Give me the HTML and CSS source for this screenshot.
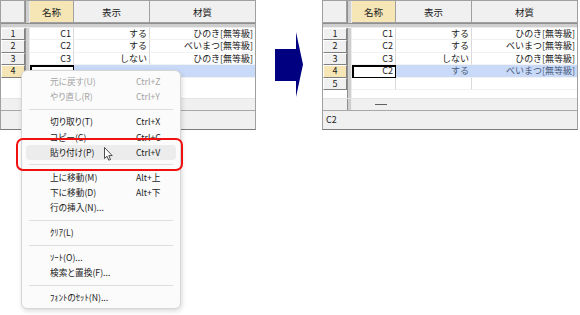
FILE: index.html
```html
<!DOCTYPE html>
<html lang="ja">
<head>
  <meta charset="UTF-8" />
  <title>貼り付け</title>
  <link rel="stylesheet" href="styles.css">
</head>
<body>
  <div class="page">

    <div class="shot">
      <div class="head">
        <div class="corner"></div>
        <div class="split"></div>
        <div class="hcell c-name cur">名称</div>
        <div class="hcell c-view">表示</div>
        <div class="hcell c-mat">材質</div>
      </div>
      <div class="hsplit"></div>
      <div class="row">
        <div class="rh">1</div><div class="split"></div>
        <div class="cell c-name">C1</div><div class="cell c-view">する</div><div class="cell c-mat">ひのき[無等級]</div>
      </div>
      <div class="row">
        <div class="rh">2</div><div class="split"></div>
        <div class="cell c-name">C2</div><div class="cell c-view">する</div><div class="cell c-mat">べいまつ[無等級]</div>
      </div>
      <div class="row">
        <div class="rh">3</div><div class="split"></div>
        <div class="cell c-name">C3</div><div class="cell c-view">しない</div><div class="cell c-mat">ひのき[無等級]</div>
      </div>
      <div class="row sel">
        <div class="rh cur">4</div><div class="split"></div>
        <div class="cell c-name edit"></div><div class="cell c-view"></div><div class="cell c-mat"></div>
      </div>
      <div class="fill">
        <div class="blank"></div><div class="split"></div>
      </div>
      <div class="strip">
        <div class="blank"></div><div class="split"></div><div class="strip-body"></div>
      </div>
      <div class="status"></div>

      <div class="menu">
        <div class="item off"><span class="label">元に戻す(U)</span><span class="key">Ctrl+Z</span></div>
        <div class="item off"><span class="label">やり直し(R)</span><span class="key">Ctrl+Y</span></div>
        <div class="sep"></div>
        <div class="item"><span class="label">切り取り(T)</span><span class="key">Ctrl+X</span></div>
        <div class="item"><span class="label">コピー(C)</span><span class="key">Ctrl+C</span></div>
        <div class="item hover"><span class="label">貼り付け(P)</span><span class="key">Ctrl+V</span></div>
        <div class="sep"></div>
        <div class="item"><span class="label">上に移動(M)</span><span class="key">Alt+上</span></div>
        <div class="item"><span class="label">下に移動(D)</span><span class="key">Alt+下</span></div>
        <div class="item"><span class="label">行の挿入(N)...</span></div>
        <div class="sep"></div>
        <div class="item"><span class="label">ｸﾘｱ(L)</span></div>
        <div class="sep"></div>
        <div class="item"><span class="label">ｿｰﾄ(O)...</span></div>
        <div class="item"><span class="label">検索と置換(F)...</span></div>
        <div class="sep"></div>
        <div class="item"><span class="label">ﾌｫﾝﾄのｾｯﾄ(N)...</span></div>
      </div>
      <div class="mark"></div>
      <svg class="pointer" width="10" height="15" viewBox="0 0 10 15">
        <path d="M0.5 0.5 L0.5 11.5 L3 9.2 L4.8 13.2 L6.5 12.5 L4.8 8.6 L8.2 8.6 Z" fill="#fff" stroke="#222" stroke-width="0.8" stroke-linejoin="round"/>
      </svg>
    </div>

    <div class="arrow">
      <svg width="66" height="130" viewBox="0 0 66 130">
        <polygon points="19,49 40,49 40,32 47,64.5 40,97 40,81 19,81" fill="#000080"/>
      </svg>
    </div>

    <div class="shot">
      <div class="head">
        <div class="corner"></div>
        <div class="split"></div>
        <div class="hcell c-name cur">名称</div>
        <div class="hcell c-view">表示</div>
        <div class="hcell c-mat">材質</div>
      </div>
      <div class="hsplit"></div>
      <div class="row">
        <div class="rh">1</div><div class="split"></div>
        <div class="cell c-name">C1</div><div class="cell c-view">する</div><div class="cell c-mat">ひのき[無等級]</div>
      </div>
      <div class="row">
        <div class="rh">2</div><div class="split"></div>
        <div class="cell c-name">C2</div><div class="cell c-view">する</div><div class="cell c-mat">べいまつ[無等級]</div>
      </div>
      <div class="row">
        <div class="rh">3</div><div class="split"></div>
        <div class="cell c-name">C3</div><div class="cell c-view">しない</div><div class="cell c-mat">ひのき[無等級]</div>
      </div>
      <div class="row sel">
        <div class="rh cur">4</div><div class="split"></div>
        <div class="cell c-name edit">C2</div><div class="cell c-view">する</div><div class="cell c-mat">べいまつ[無等級]</div>
      </div>
      <div class="row">
        <div class="rh">5</div><div class="split"></div>
        <div class="cell c-name"></div><div class="cell c-view"></div><div class="cell c-mat"></div>
      </div>
      <div class="fill">
        <div class="blank"></div><div class="split"></div>
      </div>
      <div class="strip">
        <div class="blank"></div><div class="split"></div>
        <div class="strip-body"><span class="dash"></span></div>
      </div>
      <div class="status">C2</div>
    </div>

  </div>
</body>
</html>
```

FILE: styles.css
```css
html, body {
  height: 100%;
}
body {
  margin: 0;
  background: #fff;
  font-family: "Noto Sans CJK JP", "Noto Sans", sans-serif;
  color: #222;
}
.page {
  display: flex;
  align-items: flex-start;
  min-height: 315px;
}
.shot {
  position: relative;
  width: 256px;
  height: 130px;
  box-sizing: border-box;
  border: 1px solid #a0a0a0;
  border-bottom-color: #7a7a7a;
  display: flex;
  flex-direction: column;
  font-size: 9px;
}
.arrow {
  width: 66px;
  height: 130px;
}
.arrow svg {
  display: block;
}

/* grid */
.head {
  display: flex;
  height: 22px;
  flex: none;
  background: #f0f0f0;
  font-size: 9.5px;
}
.corner {
  width: 24px;
  flex: none;
  box-sizing: border-box;
  border-right: 1px solid #a0a0a0;
  border-bottom: 1px solid #a0a0a0;
}
.split {
  width: 5px;
  flex: none;
  box-sizing: border-box;
  background: #cfcfcf;
  border-left: 1px solid #8f8f8f;
  border-right: 1px solid #ececec;
}
.hsplit {
  height: 5px;
  flex: none;
  box-sizing: border-box;
  background: #cfcfcf;
  border-top: 1px solid #8f8f8f;
  border-bottom: 1px solid #ececec;
}
.hcell {
  display: flex;
  align-items: center;
  justify-content: center;
  box-sizing: border-box;
  border-right: 1px solid #a0a0a0;
  border-bottom: 1px solid #a0a0a0;
}
.c-name { width: 44px; flex: none; }
.c-view { width: 76px; flex: none; }
.c-mat { flex: 1; border-right: none !important; }
.cur { background: #f6e6b6; }

.row {
  display: flex;
  height: 12.4px;
  flex: none;
}
.rh {
  width: 24px;
  flex: none;
  box-sizing: border-box;
  background: #f0f0f0;
  border: 1px solid;
  border-color: #fff #808080 #808080 #fff;
  text-align: center;
  line-height: 10px;
}
.rh.cur {
  background: #f6e6b6;
}
.cell {
  box-sizing: border-box;
  border-right: 1px solid #d9d9d9;
  border-bottom: 1px solid #f2f2f2;
  text-align: right;
  padding-right: 2px;
  line-height: 11px;
  white-space: nowrap;
}
.sel .cell {
  background: #c8daf8;
  color: #4a5a7c;
  border-right-color: #c8daf8;
}
.sel .cell.edit {
  background: #fff;
  color: #222;
  border: 1px solid #000;
  box-shadow: inset 1px 1px 0 #000;
  line-height: 9.5px;
}
.fill {
  flex: 1;
  display: flex;
}
.blank {
  width: 24px;
  flex: none;
}
.strip {
  height: 12px;
  flex: none;
  display: flex;
  background: #f0f0f0;
  border-top: 1px solid #e4e4e4;
  box-sizing: border-box;
}
.strip-body {
  flex: 1;
}
.dash {
  display: block;
  width: 12px;
  height: 1px;
  background: #606060;
  margin: 5px 0 0 23px;
}
.status {
  height: 19px;
  flex: none;
  box-sizing: border-box;
  background: #f0f0f0;
  border-top: 1px solid #a8a8a8;
  padding: 3px 3px 0;
  line-height: 12px;
}

/* context menu */
.menu {
  position: absolute;
  left: 20px;
  top: 69px;
  width: 160px;
  box-sizing: border-box;
  padding: 3px 4px 2px;
  background: #fbfbfb;
  border: 1px solid #d6d6d6;
  border-radius: 6px;
  box-shadow: 1px 2px 5px rgba(0, 0, 0, 0.15);
  font-size: 8.7px;
  font-feature-settings: "palt";
  color: #1a1a1a;
  z-index: 2;
}
.item {
  display: flex;
  align-items: center;
  height: 15.3px;
  padding-left: 24px;
  border-radius: 4px;
  white-space: nowrap;
}
.item .label {
  width: 86px;
}
.item.off {
  color: #a3a3a3;
}
.item.hover {
  background: #ececec;
}
.sep {
  height: 9.6px;
  margin: 0 3px;
  background: linear-gradient(#dedede, #dedede) center / 100% 1px no-repeat;
}
.mark {
  position: absolute;
  left: 15px;
  top: 137px;
  width: 167px;
  height: 33px;
  box-sizing: border-box;
  border: 2px solid #f01010;
  border-radius: 7px;
  z-index: 3;
}
.pointer {
  position: absolute;
  left: 103px;
  top: 146px;
  z-index: 4;
}
```
